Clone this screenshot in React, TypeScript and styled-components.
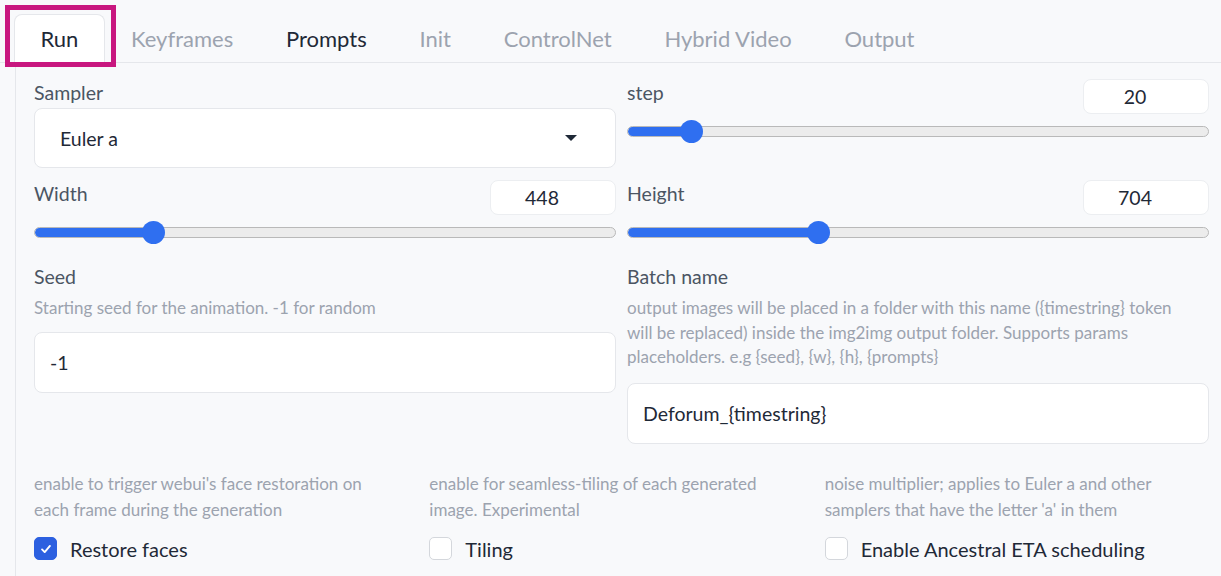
import React from "react";
import styled, { createGlobalStyle } from "styled-components";

const Global = createGlobalStyle`
  html, body { margin: 0; padding: 0; background: #f8f9fb; }
  body { font-family: Lato, "Noto Sans", "Liberation Sans", sans-serif; color: #1f2937; }
  * { box-sizing: border-box; }
`;

const Page = styled.div`
  position: relative;
  width: 1221px;
  height: 576px;
  overflow: hidden;
  padding-top: 14px;
`;

const TabBar = styled.div`
  display: flex;
  padding-left: 14px;
  border-bottom: 1px solid #e5e7eb;
  height: 49px;
`;

const Tab = styled.div<{ $active?: boolean; $dim?: boolean }>`
  height: 49px;
  padding: 0 25.4px 2px;
  display: flex;
  align-items: center;
  font-size: 22px;
  color: ${(p) => (p.$dim ? "#9ca3af" : "#1f2937")};
  background: ${(p) => (p.$active ? "#ffffff" : "transparent")};
  border: 1px solid ${(p) => (p.$active ? "#e5e7eb" : "transparent")};
  border-bottom: none;
  border-radius: 8px 8px 0 0;
  margin-bottom: -1px;
`;

const Highlight = styled.div`
  position: absolute;
  left: 5px;
  top: 5px;
  width: 111px;
  height: 62px;
  border: 5px solid #c8177f;
  pointer-events: none;
`;

const Panel = styled.div`
  margin-left: 15px;
  border-left: 1px solid #e5e7eb;
  padding: 16px 12px 0 18px;
  height: 600px;
`;

const Grid = styled.div`
  display: grid;
  grid-template-columns: 1fr 1fr;
  column-gap: 11px;
`;

const Field = styled.div<{ $mt?: number }>`
  display: flex;
  flex-direction: column;
  margin-top: ${(p) => p.$mt ?? 0}px;
`;

const Label = styled.div`
  font-size: 19.5px;
  line-height: 28px;
  color: #4b5563;
`;

const Info = styled.div`
  font-size: 17px;
  line-height: 24.5px;
  color: #9ca3af;
  margin-top: 5px;
`;

const SelectBox = styled.div`
  margin-top: -6px;
  height: 60px;
  background: #fff;
  border: 1px solid #e5e7eb;
  border-radius: 8px;
  display: flex;
  align-items: center;
  justify-content: space-between;
  padding: 0 38px 0 25px;
  font-size: 19.5px;
  color: #1f2937;
`;

const Caret = styled.div`
  width: 0;
  height: 0;
  border-left: 6px solid transparent;
  border-right: 6px solid transparent;
  border-top: 6px solid #1f2937;
`;

const SliderHead = styled.div`
  display: flex;
  justify-content: space-between;
  align-items: flex-start;
  height: 35px;
`;

const NumberBox = styled.div`
  width: 126px;
  height: 35px;
  background: #fff;
  border: 1px solid #eceef1;
  border-radius: 8px;
  display: flex;
  align-items: center;
  justify-content: center;
  padding-right: 22px;
  font-size: 19.5px;
  color: #1f2937;
`;

const Track = styled.div`
  position: relative;
  margin-top: 6px;
  height: 22px;
  display: flex;
  align-items: center;
`;

const Rail = styled.div`
  flex: 1;
  height: 11px;
  border-radius: 6px;
  background: #ececec;
  border: 1px solid #b9b9b9;
  overflow: hidden;
  position: relative;
`;

const Fill = styled.div`
  position: absolute;
  left: 0;
  top: -1px;
  bottom: -1px;
  background: #2f6ff0;
  border-radius: 6px 0 0 6px;
`;

const Thumb = styled.div`
  position: absolute;
  top: 0;
  width: 23px;
  height: 23px;
  margin-left: -11.5px;
  border-radius: 50%;
  background: #2f6ff0;
`;

const TextBox = styled.div<{ $mt: number }>`
  margin-top: ${(p) => p.$mt}px;
  height: 61px;
  background: #fff;
  border: 1px solid #e5e7eb;
  border-radius: 8px;
  display: flex;
  align-items: center;
  padding: 0 15px;
  font-size: 19.5px;
  color: #1f2937;
`;

const CheckRow = styled.div`
  display: grid;
  grid-template-columns: repeat(3, 1fr);
  column-gap: 11px;
  margin-top: 26px;
`;

const CheckCol = styled.div`
  display: flex;
  flex-direction: column;
`;

const CheckInfo = styled.div`
  font-size: 17px;
  line-height: 26px;
  color: #9ca3af;
  min-height: 52px;
  padding-top: 1px;
`;

const CheckLine = styled.label`
  display: flex;
  align-items: center;
  gap: 13px;
  margin-top: 14px;
  font-size: 20px;
  color: #1f2937;
`;

const Box = styled.span<{ $on?: boolean }>`
  width: 23px;
  height: 23px;
  border-radius: 5px;
  display: inline-flex;
  align-items: center;
  justify-content: center;
  background: ${(p) => (p.$on ? "#2c60e0" : "#fff")};
  border: 1px solid ${(p) => (p.$on ? "#2c60e0" : "#d4d7dc")};
`;

function Slider({ label, value, pct }: { label: string; value: string; pct: number }) {
  return (
    <Field>
      <SliderHead>
        <Label>{label}</Label>
        <NumberBox>{value}</NumberBox>
      </SliderHead>
      <Track>
        <Rail>
          <Fill style={{ width: `${pct}%` }} />
        </Rail>
        <Thumb style={{ left: `${pct}%` }} />
      </Track>
    </Field>
  );
}

function Check({ on, label, info }: { on?: boolean; label: string; info: [string, string] }) {
  return (
    <CheckCol>
      <CheckInfo>
        {info[0]}
        <br />
        {info[1]}
      </CheckInfo>
      <CheckLine>
        <Box $on={on}>
          {on && (
            <svg width="14" height="14" viewBox="0 0 16 16">
              <path d="M3.5 8.5l3 3 6-7" fill="none" stroke="#fff" strokeWidth="2.2" strokeLinecap="round" strokeLinejoin="round" />
            </svg>
          )}
        </Box>
        {label}
      </CheckLine>
    </CheckCol>
  );
}

export default function App() {
  const tabs = ["Run", "Keyframes", "Prompts", "Init", "ControlNet", "Hybrid Video", "Output"];
  return (
    <Page>
      <Global />
      <TabBar>
        {tabs.map((t, i) => (
          <Tab key={t} $active={i === 0} $dim={i !== 0 && i !== 2}>
            {t}
          </Tab>
        ))}
      </TabBar>
      <Highlight />
      <Panel>
        <Grid>
          <Field>
            <SliderHead>
              <Label>Sampler</Label>
            </SliderHead>
            <SelectBox>
              Euler a
              <Caret />
            </SelectBox>
          </Field>
          <Slider label="step" value="20" pct={11} />
          <Field $mt={12}>
            <Slider label="Width" value="448" pct={20.6} />
          </Field>
          <Field $mt={12}>
            <Slider label="Height" value="704" pct={32.9} />
          </Field>
          <Field $mt={20}>
            <Label>Seed</Label>
            <Info>Starting seed for the animation. -1 for random</Info>
            <TextBox $mt={11}>-1</TextBox>
          </Field>
          <Field $mt={20}>
            <Label>Batch name</Label>
            <Info>
              output images will be placed in a folder with this name ({"{timestring}"} token
              <br />
              will be replaced) inside the img2img output folder. Supports params
              <br />
              placeholders. e.g {"{seed}"}, {"{w}"}, {"{h}"}, {"{prompts}"}
            </Info>
            <TextBox $mt={13}>Deforum_{"{timestring}"}</TextBox>
          </Field>
        </Grid>
        <CheckRow>
          <Check
            on
            label="Restore faces"
            info={["enable to trigger webui's face restoration on", "each frame during the generation"]}
          />
          <Check label="Tiling" info={["enable for seamless-tiling of each generated", "image. Experimental"]} />
          <Check
            label="Enable Ancestral ETA scheduling"
            info={["noise multiplier; applies to Euler a and other", "samplers that have the letter 'a' in them"]}
          />
        </CheckRow>
      </Panel>
    </Page>
  );
}
